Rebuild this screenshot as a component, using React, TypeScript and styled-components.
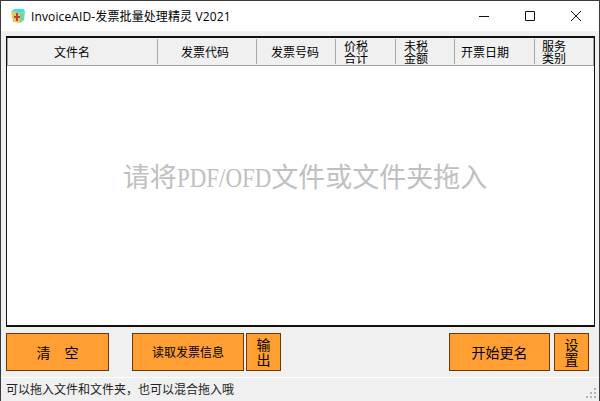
import styled, { createGlobalStyle } from "styled-components";

const GlobalStyle = createGlobalStyle`
  html, body {
    margin: 0;
    padding: 0;
    background: #f0f0f0;
  }
`;

const columns = [
  { label: "文件名", width: 150, pad: 46 },
  { label: "发票代码", width: 99, pad: 23 },
  { label: "发票号码", width: 79, pad: 14 },
  { label: "价税合计", width: 60, pad: 8, narrow: true },
  { label: "未税金额", width: 59, pad: 8, narrow: true },
  { label: "开票日期", width: 80, pad: 6 },
  { label: "服务类别", width: 57, pad: 7, narrow: true },
];

const App = () => {
  return (
    <Frame>
      <GlobalStyle />
      <TitleBar>
        <AppIcon viewBox="0 0 16 16">
          <path d="M1 3l9-1v13l-7-1z" fill="#d8cf5c" />
          <path d="M4 1l10 0 1 3-5 1-8-2z" fill="#45dde6" />
          <path d="M10 5l5-1-1 8-4 3z" fill="#6fd89a" />
          <path d="M6 5h2v3h2v2H8v3H6v-3H4V8h2z" fill="#c23c46" />
        </AppIcon>
        <AppTitle>InvoiceAID-发票批量处理精灵 V2021</AppTitle>
        <WindowButtons>
          <WindowButton>
            <svg width="10" height="10" viewBox="0 0 10 10">
              <path d="M0 5.5h10" stroke="#111" fill="none" />
            </svg>
          </WindowButton>
          <WindowButton>
            <svg width="10" height="10" viewBox="0 0 10 10">
              <path d="M.5.5h9v9h-9z" stroke="#111" fill="none" />
            </svg>
          </WindowButton>
          <WindowButton>
            <svg width="10" height="10" viewBox="0 0 10 10">
              <path d="M0 0l10 10M10 0L0 10" stroke="#111" fill="none" />
            </svg>
          </WindowButton>
        </WindowButtons>
      </TitleBar>

      <Content>
        <ListBox>
          <ListHeader>
            {columns.map((col) => (
              <HeaderCell key={col.label} $width={col.width} $pad={col.pad}>
                <HeaderLabel $narrow={col.narrow}>{col.label}</HeaderLabel>
              </HeaderCell>
            ))}
          </ListHeader>
          <ListBody>
            <DropHint>
              请将<HintLatin>PDF/OFD</HintLatin>文件或文件夹拖入
            </DropHint>
          </ListBody>
        </ListBox>

        <ButtonRow>
          <ActionButton $width={103}>清　空</ActionButton>
          <ActionButton $width={112} $left={23} $small>
            读取发票信息
          </ActionButton>
          <ActionButton $width={35} $left={2} $stacked>
            输出
          </ActionButton>
          <ActionButton $width={101} $left={168}>
            开始更名
          </ActionButton>
          <ActionButton $width={35} $left={4} $stacked>
            设置
          </ActionButton>
        </ButtonRow>
      </Content>

      <StatusBar>
        <StatusText>可以拖入文件和文件夹，也可以混合拖入哦</StatusText>
        <Grip width="11" height="11" viewBox="0 0 11 11">
          <path d="M8 0h2v2H8zM4 4h2v2H4zM8 4h2v2H8zM0 8h2v2H0zM4 8h2v2H4zM8 8h2v2H8z" fill="#b4b4b4" />
        </Grip>
      </StatusBar>
    </Frame>
  );
};

export default App;

const cjk = `"Noto Sans CJK SC", "Liberation Sans", sans-serif`;

const Frame = styled.div`
  width: 600px;
  height: 401px;
  box-sizing: border-box;
  border: 1px solid #3a3a3a;
  border-bottom: none;
  background: #f0f0f0;
  display: flex;
  flex-direction: column;
  overflow: hidden;
  font-family: ${cjk};
`;

const TitleBar = styled.div`
  height: 30px;
  flex: none;
  background: #fff;
  display: flex;
  align-items: center;
  padding-left: 9px;
`;

const AppIcon = styled.svg`
  width: 16px;
  height: 16px;
  flex: none;
`;

const AppTitle = styled.div`
  margin-left: 5px;
  font-size: 12px;
  letter-spacing: 0.12px;
  color: #000;
  white-space: nowrap;
  font-family: "Open Sans", "Noto Sans CJK SC", sans-serif;
`;

const WindowButtons = styled.div`
  margin-left: auto;
  display: flex;
`;

const WindowButton = styled.div`
  width: 46px;
  height: 30px;
  display: flex;
  align-items: center;
  justify-content: center;
`;

const Content = styled.div`
  flex: 1;
  padding: 5px 4px 0 5px;
  display: flex;
  flex-direction: column;
`;

const ListBox = styled.div`
  height: 291px;
  box-sizing: border-box;
  border: 1px solid #111;
  border-top-width: 2px;
  border-bottom-width: 2px;
  background: #fff;
  display: flex;
  flex-direction: column;
  flex: none;
`;

const ListHeader = styled.div`
  height: 28px;
  flex: none;
  display: flex;
  background: #f0f0f0;
  border: 1px solid #a0a0a0;
  border-top: none;
  box-sizing: border-box;
`;

const HeaderCell = styled.div<{ $width: number; $pad: number }>`
  width: ${(p) => p.$width}px;
  flex: none;
  box-sizing: border-box;
  border-right: 1px solid #a8a8a8;
  margin: 1px 0;
  padding-left: ${(p) => p.$pad}px;
  display: flex;
  align-items: center;
  &:last-child {
    border-right: none;
  }
`;

const HeaderLabel = styled.span<{ $narrow?: boolean }>`
  font-size: 12px;
  line-height: ${(p) => (p.$narrow ? "12px" : "14px")};
  width: ${(p) => (p.$narrow ? "24px" : "auto")};
  color: #000;
`;

const ListBody = styled.div`
  flex: 1;
  display: flex;
  align-items: center;
  justify-content: center;
  padding: 0 0 38px 9px;
`;

const DropHint = styled.div`
  font-family: "Noto Sans CJK SC", sans-serif;
  font-size: 27px;
  line-height: 36px;
  color: #c0c0c0;
  white-space: nowrap;
`;

/* tall narrow latin letters, the reference font is half-width */
const HintLatin = styled.span`
  display: inline-block;
  font-family: "Liberation Serif", serif;
  transform: scaleX(0.85);
  transform-origin: left center;
  margin-right: -16.6px;
`;

const ButtonRow = styled.div`
  display: flex;
  margin-top: 6px;
`;

const ActionButton = styled.button<{
  $width: number;
  $left?: number;
  $small?: boolean;
  $stacked?: boolean;
}>`
  width: ${(p) => p.$width}px;
  height: 38px;
  margin-left: ${(p) => p.$left ?? 0}px;
  padding: 0 ${(p) => (p.$stacked ? "9px" : "0")};
  box-sizing: border-box;
  background: #ff9f33;
  border: 1px solid #6b3a0a;
  color: #000;
  font-family: ${cjk};
  font-size: ${(p) => (p.$small ? "12px" : "14px")};
  line-height: ${(p) => (p.$stacked ? "15px" : "18px")};
`;

const StatusBar = styled.div`
  margin-top: 5px;
  height: 24px;
  flex: none;
  box-sizing: border-box;
  border-top: 1px solid #fff;
  padding: 0 0 2px 5px;
  display: flex;
  align-items: center;
  position: relative;
`;

const StatusText = styled.div`
  font-size: 12px;
  color: #222;
`;

const Grip = styled.svg`
  position: absolute;
  right: 2px;
  bottom: 2px;
`;
